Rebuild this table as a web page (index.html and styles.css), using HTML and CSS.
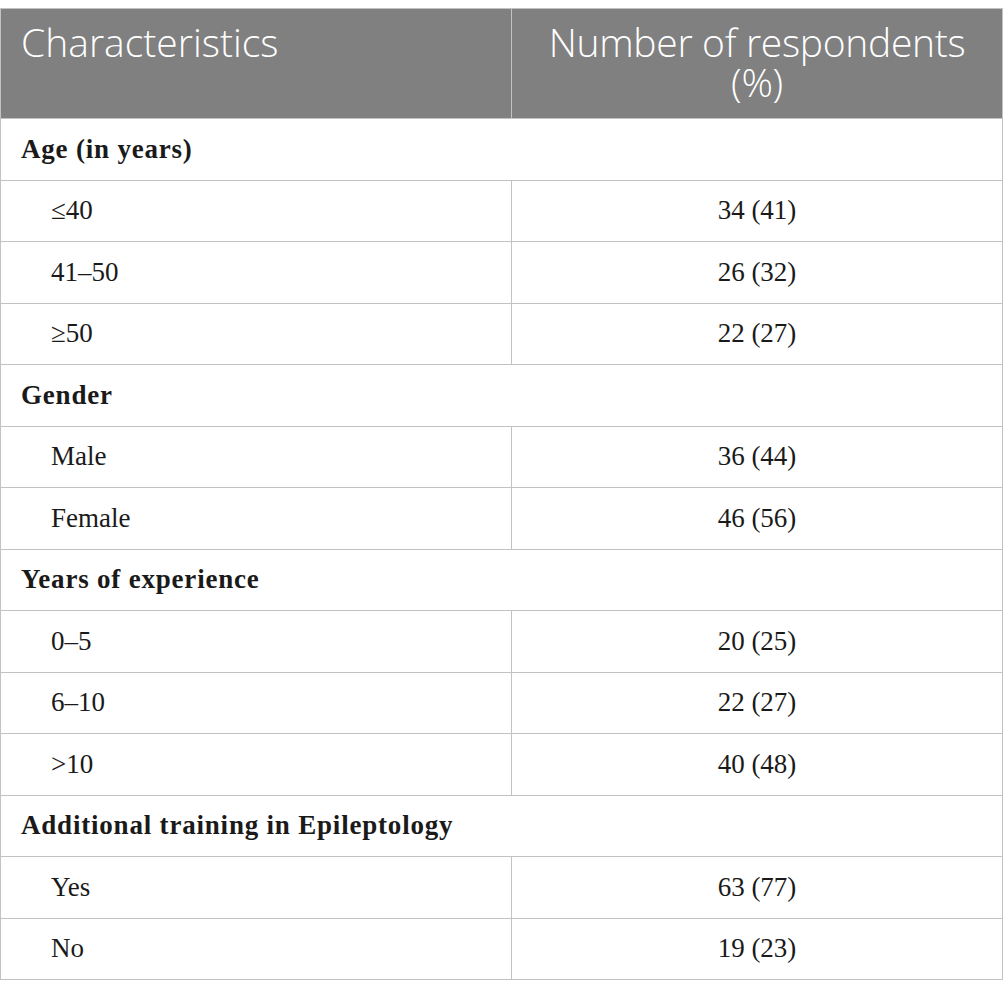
FILE: index.html
```html
<!DOCTYPE html>
<html lang="en">
<head>
    <meta charset="UTF-8">
    <title>Respondent characteristics</title>
    <link rel="stylesheet" href="styles.css">
</head>
<body>

<table class="stats">
    <thead>
        <tr>
            <th class="label-col">Characteristics</th>
            <th class="value-col">Number of respondents (%)</th>
        </tr>
    </thead>
    <tbody>
        <tr class="group"><td colspan="2">Age (in years)</td></tr>
        <tr><td class="sub">&le;40</td><td class="value">34 (41)</td></tr>
        <tr><td class="sub">41&ndash;50</td><td class="value">26 (32)</td></tr>
        <tr><td class="sub">&ge;50</td><td class="value">22 (27)</td></tr>
        <tr class="group"><td colspan="2">Gender</td></tr>
        <tr><td class="sub">Male</td><td class="value">36 (44)</td></tr>
        <tr><td class="sub">Female</td><td class="value">46 (56)</td></tr>
        <tr class="group"><td colspan="2">Years of experience</td></tr>
        <tr><td class="sub">0&ndash;5</td><td class="value">20 (25)</td></tr>
        <tr><td class="sub">6&ndash;10</td><td class="value">22 (27)</td></tr>
        <tr><td class="sub">&gt;10</td><td class="value">40 (48)</td></tr>
        <tr class="group"><td colspan="2">Additional training in Epileptology</td></tr>
        <tr><td class="sub">Yes</td><td class="value">63 (77)</td></tr>
        <tr><td class="sub">No</td><td class="value">19 (23)</td></tr>
    </tbody>
</table>

</body>
</html>
```
FILE: styles.css
```css
body {
    margin: 8px 0 0 0;
    background: #fff;
    font-family: "Liberation Serif", serif;
    color: #1a1a1a;
}
.stats {
    width: 1003px;
    border-collapse: collapse;
    table-layout: fixed;
}
.stats th, .stats td {
    border: 1px solid #c2c2c2;
}
.stats th {
    background: #7f807f;
    color: #fff;
    font-family: "Open Sans", sans-serif;
    font-weight: 300;
    font-size: 39px;
    line-height: 40px;
    vertical-align: top;
    padding: 13px 20px 16px 20px;
    height: 80px;
}
.label-col {
    width: 470px;
    text-align: left;
}
.value-col {
    text-align: center;
    letter-spacing: -0.3px;
}
.stats td {
    height: 61.5px;
    padding: 0 20px;
    font-size: 27px;
    vertical-align: middle;
    box-sizing: border-box;
}
.group td {
    font-weight: bold;
    letter-spacing: 0.8px;
}
.stats td.sub {
    padding-left: 50px;
}
.stats td.value {
    text-align: center;
}
```
